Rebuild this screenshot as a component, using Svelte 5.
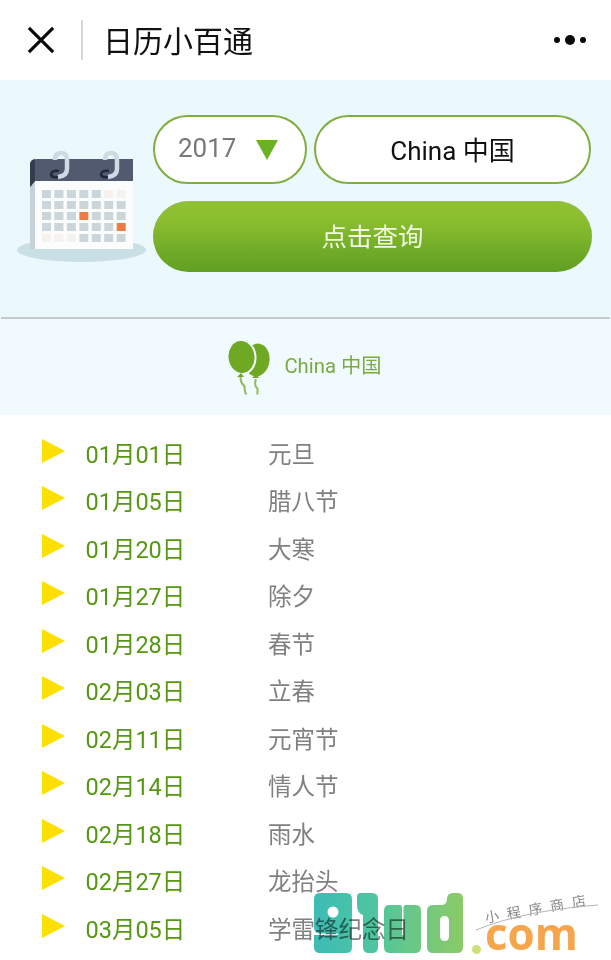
<script lang="ts">
  const holidays = [
    ['01月01日', '元旦'],
    ['01月05日', '腊八节'],
    ['01月20日', '大寒'],
    ['01月27日', '除夕'],
    ['01月28日', '春节'],
    ['02月03日', '立春'],
    ['02月11日', '元宵节'],
    ['02月14日', '情人节'],
    ['02月18日', '雨水'],
    ['02月27日', '龙抬头'],
    ['03月05日', '学雷锋纪念日']
  ];

  // calendar cells: g = grey, p = pale, o = orange
  const cells = ['gggggpp', 'ggggggg', 'gggoggg', 'ggggggo', 'pppgggg'];
</script>

<div class="page">
  <header class="topbar">
    <svg class="close" viewBox="0 0 30 30" aria-hidden="true">
      <path d="M2 2 L28 28 M28 2 L2 28" fill="none" stroke="#0a0a0a" stroke-width="3.4" />
    </svg>
    <span class="sep"></span>
    <h1>日历小百通</h1>
    <svg class="more" viewBox="0 0 34 12" aria-hidden="true">
      <circle cx="4" cy="6" r="3" fill="#0a0a0a" />
      <circle cx="17" cy="6" r="5" fill="#0a0a0a" />
      <circle cx="30" cy="6" r="3" fill="#0a0a0a" />
    </svg>
  </header>

  <section class="panel">
    <div class="query">
      <svg class="calendar" viewBox="0 0 129 112" aria-hidden="true">
        <ellipse cx="64.500" cy="100" rx="64.500" ry="12" fill="#c9dfe5" />
        <rect x="13" y="30" width="103" height="69" fill="#fbfdfd" />
        <rect x="13" y="32" width="5" height="67" fill="#c5d2d8" />
        <path d="M13 15 Q13 9 20 9 H116 V31 H18 L13 37 Z" fill="#525a70" />
        <path d="M13 15 Q13 10 18 9 V31 L13 37 Z" fill="#343c4e" />
        <path d="M42 21 Q34 20 34 25 Q35 28 42 27" fill="none" stroke="#20283a" stroke-width="2.500" />
        <path d="M38 10 Q38 3 44 3 Q50 3 50 10 V19 Q50 26 41 27" fill="none" stroke="#cddce2" stroke-width="4.500" />
        <path d="M92 21 Q84 20 84 25 Q85 28 92 27" fill="none" stroke="#20283a" stroke-width="2.500" />
        <path d="M88 10 Q88 3 94 3 Q100 3 100 10 V19 Q100 26 91 27" fill="none" stroke="#cddce2" stroke-width="4.500" />
        {#each cells as row, r}
          {#each row.split('') as c, i}
            <rect
              x={25 + i * 12.450}
              y={40 + r * 11}
              width="9"
              height="8"
              fill={c === 'o' ? '#ee7a45' : c === 'p' ? '#f6f2ee' : '#cad6da'}
            />
          {/each}
        {/each}
      </svg>

      <div class="form">
        <div class="pickers">
          <div class="pill year">
            <span>2017</span>
            <svg class="caret" viewBox="0 0 22 20" aria-hidden="true">
              <path d="M0 0 H22 L11 20 Z" fill="#6cb024" />
            </svg>
          </div>
          <div class="pill country">China 中国</div>
        </div>
        <button class="search">点击查询</button>
      </div>
    </div>

    <div class="rule"></div>

    <div class="current">
      <svg class="balloons" viewBox="0 0 42 55" aria-hidden="true">
        <ellipse cx="29" cy="20" rx="12.500" ry="16.500" transform="rotate(8 29 20)" fill="#6fa823" />
        <path d="M24 38 L28 34 L31 38 Z" fill="#6fa823" />
        <ellipse cx="13.500" cy="17" rx="14" ry="17" transform="rotate(-6 13.500 17)" fill="#6fa823" stroke="#f1fafe" stroke-width="2" />
        <path d="M9 37 L13 33 L16 37 Z" fill="#6fa823" />
        <path d="M12.700 37 C12 41 14 44 16.500 46.500 C17 49 16 51 18.300 54.500 M27.700 39 C27.700 42 25.500 45 29 48 C30.500 50 29 52 29.500 54.500" fill="none" stroke="#8fbb58" stroke-width="2" />
      </svg>
      <span>China 中国</span>
    </div>
  </section>

  <ul class="list">
    {#each holidays as [date, name]}
      <li>
        <svg class="arrow" viewBox="0 0 23 24" aria-hidden="true">
          <path d="M0 0 L23 12 L0 24 Z" fill="#fde000" />
        </svg>
        <span class="date">{date}</span>
        <span class="name">{name}</span>
      </li>
    {/each}
  </ul>

  <div class="watermark">
    <svg class="logo" viewBox="0 0 150 60" aria-hidden="true">
      <defs>
        <linearGradient id="mark" gradientUnits="userSpaceOnUse" x1="0" x2="150" y1="0" y2="0">
          <stop offset="0" stop-color="#3dbcb6" />
          <stop offset="0.4" stop-color="#4fc59f" />
          <stop offset="1" stop-color="#8ccb66" />
        </linearGradient>
      </defs>
      <g fill="url(#mark)" fill-rule="evenodd">
        <path d="M6 0 H32 Q38 0 38 6 V54 Q38 60 32 60 H6 Q0 60 0 54 V42 H24 V40.500 H6 Q0 40.500 0 34 V6 Q0 0 6 0 Z M19 13.500 A5.500 5.500 0 1 0 19.010 24.500 A5.500 5.500 0 1 0 19 13.500 Z" />
        <path d="M47 0 H58 Q64 0 64 6 V54 Q64 60 58 60 H55 Q49 60 49 54 V22 Q43 20 43 12 V4 Q43 0 47 0 Z" />
        <path d="M70 18 Q70 12 75 12 H86 Q88 12 88 14 V42 H89.500 V14 Q89.500 12 92 12 H102 Q107 12 107 18 V54 Q107 60 101 60 H76 Q70 60 70 54 Z" />
        <path d="M119 12 H127 Q133 12 133 6 Q133 0 139 0 H144 Q149 0 149 6 V54 Q149 60 143 60 H119 Q113 60 113 54 V18 Q113 12 119 12 Z M130.500 23 Q126 23 126 28 V43 Q126 48 130.500 48 Q135 48 135 43 V28 Q135 23 130.500 23 Z" />
      </g>
    </svg>
    <span class="dot"></span>
    <span class="com">com</span>
    <span class="slogan">小程序商店</span>
    <svg class="swoosh" viewBox="0 0 124 30" aria-hidden="true">
      <path d="M1 26 Q25 16 60 9 Q95 3 123 1" fill="none" stroke="#b5b5b5" stroke-width="1" />
    </svg>
  </div>
</div>

<style>
  :global(body) {
    margin: 0;
    background: #fff;
  }

  .page {
    position: relative;
    width: 611px;
    height: 960px;
    overflow: hidden;
    font-family: Roboto, "Noto Sans CJK SC", sans-serif;
  }

  .topbar {
    display: flex;
    align-items: center;
    height: 80px;
    padding: 0 24px 0 27px;
    box-sizing: border-box;
    background: #fff;
  }

  .close {
    width: 28px;
    height: 28px;
    flex: none;
  }

  .sep {
    width: 2px;
    height: 40px;
    margin: 0 20px 0 26px;
    background: #d6d6d6;
  }

  h1 {
    margin: 0 0 2px;
    font-size: 30px;
    font-weight: 400;
    color: #111;
  }

  .more {
    width: 34px;
    height: 12px;
    margin-left: auto;
  }

  .panel {
    height: 335px;
    background: #ebf8fc;
  }

  .query {
    display: flex;
    align-items: flex-end;
    gap: 7px;
    height: 192px;
    padding: 35px 19px 0 17px;
    box-sizing: border-box;
  }

  .calendar {
    width: 129px;
    height: 112px;
    flex: none;
    margin-bottom: 10px;
  }

  .form {
    display: flex;
    flex-direction: column;
    gap: 17px;
    width: 439px;
    flex: none;
  }

  .pickers {
    display: flex;
    gap: 7px;
  }

  .pill {
    display: flex;
    align-items: center;
    height: 69px;
    padding-bottom: 3px;
    box-sizing: border-box;
    border: 2px solid #7fae3f;
    border-radius: 35px;
    background: #fff;
    font-size: 26px;
  }

  .year {
    width: 154px;
    padding-left: 23px;
    color: #77787a;
  }

  .caret {
    width: 22px;
    height: 20px;
    margin-left: 20px;
    margin-top: 3px;
  }

  .country {
    width: 277px;
    justify-content: center;
    color: #111;
  }

  .search {
    height: 71px;
    padding: 0 0 4px;
    border: 0;
    border-radius: 36px;
    background: linear-gradient(#8fc231, #8cbf30 25%, #5f9f22);
    box-shadow: inset 0 1px 0 #9cb95c;
    color: #f2f8e2;
    font: inherit;
    font-size: 25.500px;
  }

  .rule {
    height: 2px;
    margin: 45px 1px 0 1px;
    background: #c6cbcc;
  }

  .current {
    display: flex;
    align-items: center;
    justify-content: center;
    gap: 14px;
    height: 96px;
    padding-right: 1px;
    box-sizing: border-box;
    background: #f1fafe;
    color: #7aa93e;
    font-size: 20.300px;
  }

  .current span {
    padding-bottom: 7px;
  }

  .balloons {
    width: 42px;
    height: 55px;
    margin-top: 1px;
  }

  .list {
    margin: 0;
    padding: 15px 0 0 42px;
    list-style: none;
  }

  li {
    display: flex;
    align-items: center;
    height: 47.500px;
    font-size: 23.500px;
  }

  .arrow {
    width: 23px;
    height: 24px;
    flex: none;
    margin: -6px 20.500px 0 0;
  }

  .date {
    width: 182.500px;
    flex: none;
    padding-bottom: 2px;
    color: #569713;
  }

  .name {
    padding-bottom: 2px;
    color: #808080;
  }

  .watermark {
    position: absolute;
    left: 314px;
    top: 893px;
    width: 290px;
    height: 62px;
  }

  .logo {
    position: absolute;
    left: 0;
    top: 0;
    width: 150px;
    height: 60px;
    mix-blend-mode: multiply;
  }

  .dot {
    position: absolute;
    left: 158px;
    top: 52px;
    width: 9px;
    height: 9px;
    border-radius: 50%;
    background: #cfe07a;
  }

  .com {
    position: absolute;
    left: 171px;
    top: 18px;
    font-family: "Open Sans", sans-serif;
    font-size: 44px;
    line-height: 44px;
    font-weight: 700;
    color: #f5a64d;
  }

  .slogan {
    position: absolute;
    left: 170px;
    top: 18px;
    font-size: 14px;
    line-height: 14px;
    letter-spacing: 8px;
    color: #888;
    transform: rotate(-10deg);
    transform-origin: left top;
    white-space: nowrap;
  }

  .swoosh {
    position: absolute;
    left: 161px;
    top: 11px;
    width: 124px;
    height: 30px;
  }
</style>
